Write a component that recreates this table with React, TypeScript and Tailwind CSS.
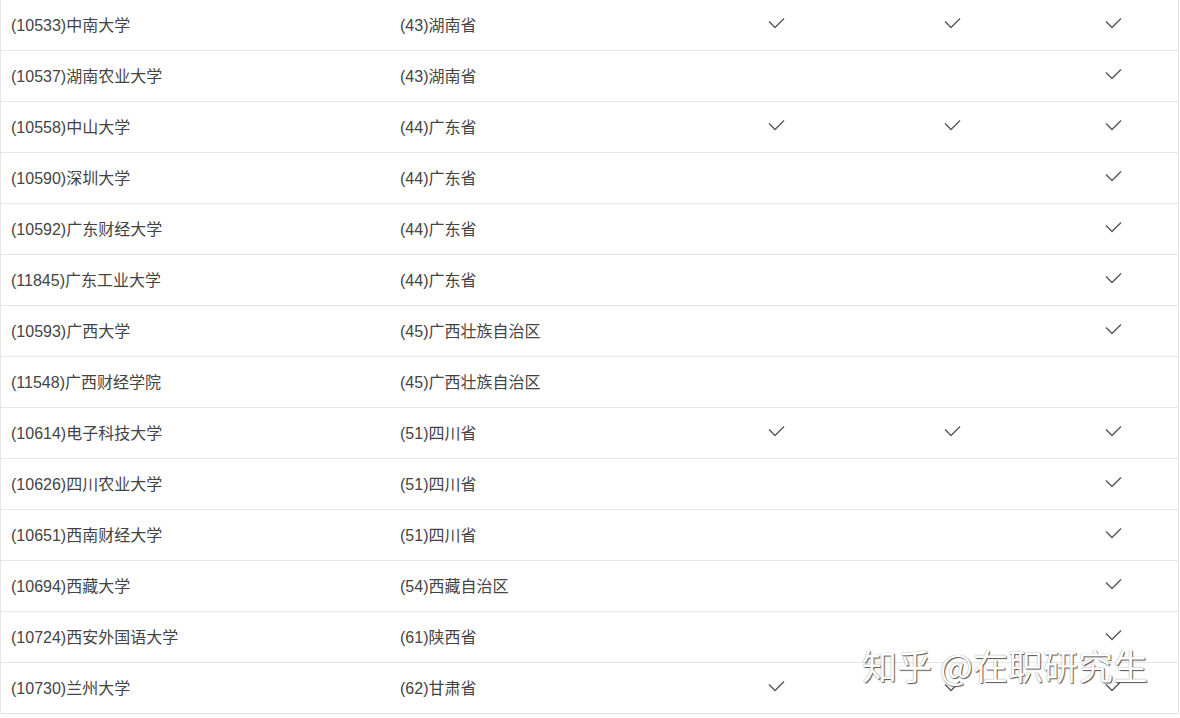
import React from "react";

const rows: [string, string, boolean, boolean, boolean][] = [
  ["(10533)中南大学", "(43)湖南省", true, true, true],
  ["(10537)湖南农业大学", "(43)湖南省", false, false, true],
  ["(10558)中山大学", "(44)广东省", true, true, true],
  ["(10590)深圳大学", "(44)广东省", false, false, true],
  ["(10592)广东财经大学", "(44)广东省", false, false, true],
  ["(11845)广东工业大学", "(44)广东省", false, false, true],
  ["(10593)广西大学", "(45)广西壮族自治区", false, false, true],
  ["(11548)广西财经学院", "(45)广西壮族自治区", false, false, false],
  ["(10614)电子科技大学", "(51)四川省", true, true, true],
  ["(10626)四川农业大学", "(51)四川省", false, false, true],
  ["(10651)西南财经大学", "(51)四川省", false, false, true],
  ["(10694)西藏大学", "(54)西藏自治区", false, false, true],
  ["(10724)西安外国语大学", "(61)陕西省", false, false, true],
  ["(10730)兰州大学", "(62)甘肃省", true, true, true],
];

function Check() {
  return (
    <svg width="17" height="12" viewBox="0 0 17 12" fill="none">
      <path d="M1 4.5 L7 10.5 L16 1.5" stroke="#5a5a5a" strokeWidth="1.5" />
    </svg>
  );
}

export default function App() {
  return (
    <div
      className="relative w-[1180px] h-[718px] bg-white overflow-hidden"
      style={{ fontFamily: '"Liberation Sans", Arial, "Noto Sans CJK SC", sans-serif' }}
    >
      <div className="w-[1179px] border-l border-r border-[#e6e6e6]">
        {rows.map((r, i) => (
          <div
            key={i}
            className="grid grid-cols-[389px_300px_172px_180px_1fr] h-[51px] border-b border-[#e6e6e6] items-center text-[16px] text-[#444]"
          >
            <div className="pl-[10px] pt-[2px]">{r[0]}</div>
            <div className="pl-[10px] pt-[2px]">{r[1]}</div>
            <div className="flex justify-center pb-[4px]">{r[2] && <Check />}</div>
            <div className="flex justify-center pb-[4px]">{r[3] && <Check />}</div>
            <div className="flex justify-center pl-[6px] pb-[4px]">{r[4] && <Check />}</div>
          </div>
        ))}
      </div>
      <div
        className="absolute left-[862px] top-[647px] text-[35px] leading-none text-white whitespace-nowrap [text-shadow:1px_1px_1px_#555,0_0_1px_#888]"
        style={{ fontFamily: '"Noto Sans CJK SC", sans-serif' }}
      >
        知乎 @在职研究生
      </div>
    </div>
  );
}
